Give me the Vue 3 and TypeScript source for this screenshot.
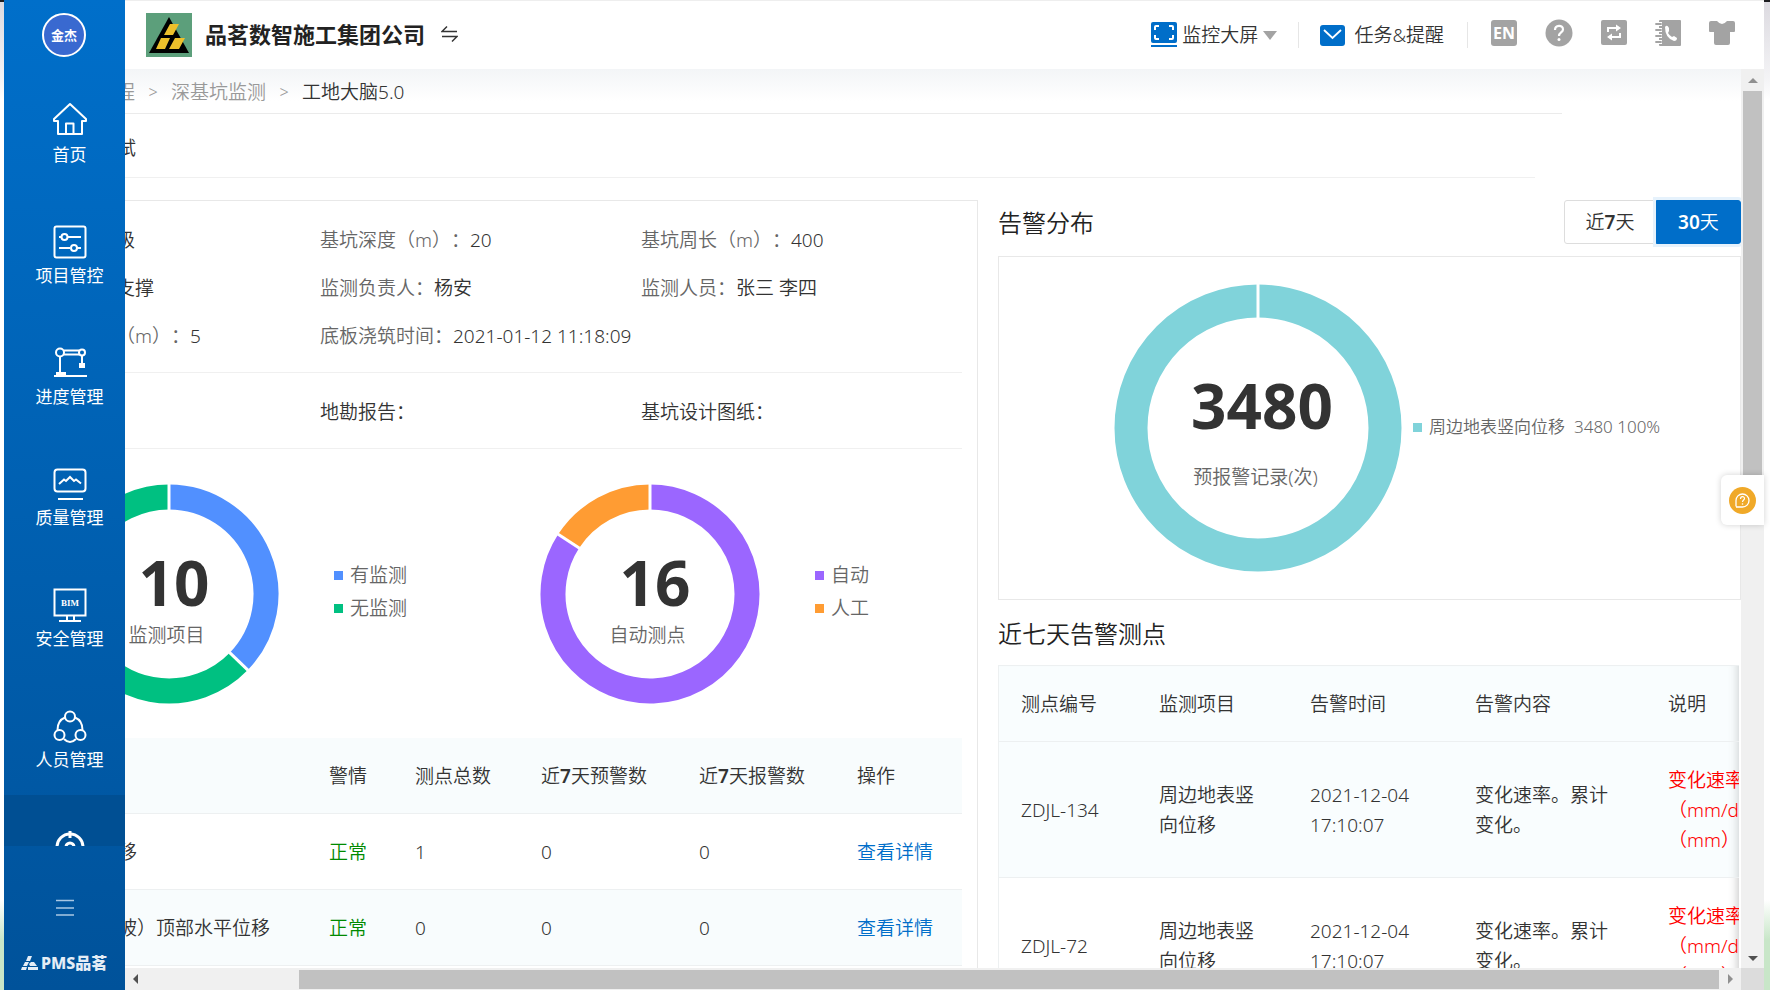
<script setup lang="ts">
import { computed, ref } from 'vue'

interface Slice { color: string; from: number; to: number }
interface NavItem { id: string; label: string }

const navItems: NavItem[] = [
  { id: 'home', label: '首页' },
  { id: 'project', label: '项目管控' },
  { id: 'progress', label: '进度管理' },
  { id: 'quality', label: '质量管理' },
  { id: 'safety', label: '安全管理' },
  { id: 'people', label: '人员管理' },
]

const range = ref<'7' | '30'>('30')

const itemSlices: Slice[] = [
  { color: '#5190ff', from: 0, to: 134 },
  { color: '#00c081', from: 134, to: 360 },
]
const pointSlices: Slice[] = [
  { color: '#9b66ff', from: 0, to: 303 },
  { color: '#ff9c33', from: 303, to: 360 },
]

function arc(slice: Slice, r: number): string {
  const at = (deg: number) => {
    const a = ((deg - 90) * Math.PI) / 180
    return `${(r * Math.cos(a)).toFixed(2)} ${(r * Math.sin(a)).toFixed(2)}`
  }
  const large = slice.to - slice.from > 180 ? 1 : 0
  return `M${at(slice.from)}A${r} ${r} 0 ${large} 1 ${at(slice.to)}`
}

const charts = computed(() => [
  {
    id: 'items', total: '10', caption: '监测项目', slices: itemSlices,
    legend: [{ color: '#5190ff', text: '有监测' }, { color: '#00c081', text: '无监测' }],
  },
  {
    id: 'points', total: '16', caption: '自动测点', slices: pointSlices,
    legend: [{ color: '#9b66ff', text: '自动' }, { color: '#ff9c33', text: '人工' }],
  },
])

const monitorRows = [
  { name: '移', state: '正常', total: 1, warn: 0, alarm: 0 },
  { name: '坡）顶部水平位移', state: '正常', total: 0, warn: 0, alarm: 0 },
]

const alarmRows = [
  { code: 'ZDJL-134', item: '周边地表竖向位移', time: '2021-12-04 17:10:07', content: '变化速率。累计变化。' },
  { code: 'ZDJL-72', item: '周边地表竖向位移', time: '2021-12-04 17:10:07', content: '变化速率。累计变化。' },
]
</script>

<template>
  <div class="app">
    <aside class="sidebar">
      <button class="avatar" type="button">金杰</button>
      <nav class="nav">
        <a v-for="item in navItems" :key="item.id" class="nav-item" href="#">
          <svg class="nav-icon" viewBox="0 0 34 34" fill="none" stroke="#fff" stroke-width="2">
            <g v-if="item.id === 'home'" stroke-linejoin="round" stroke-linecap="round">
              <path d="M1 15L17 0L33 15V17H29V30H5V17H1Z" />
              <path d="M13 30V19.500H20.500V30" />
            </g>
            <g v-else-if="item.id === 'project'">
              <rect x="1.500" y="1.500" width="31" height="31" rx="2" />
              <path d="M6 12H8M15 12H28M6 23H17M24 23H28" />
              <circle cx="11.500" cy="12" r="3" /><circle cx="21" cy="23" r="3" />
            </g>
            <g v-else-if="item.id === 'progress'">
              <circle cx="7" cy="6.500" r="4" /><circle cx="29" cy="6.500" r="3" />
              <path d="M11 4.500H26M11 8.500H26M7 11V27M29 10V18M1 30H34" />
              <path d="M4 27H12V30H4ZM27 18H31V21H27Z" fill="#fff" />
            </g>
            <g v-else-if="item.id === 'quality'">
              <rect x="1.500" y="2.500" width="31" height="22" rx="3" />
              <path d="M6 17L11 12.500L13 14L17 10L21 14L23 12.500L28 16.500M5 32H30" />
            </g>
            <g v-else-if="item.id === 'safety'">
              <path d="M1.500 1.500H32.500V27.500H1.500ZM14 28V32M21 28V32M6 33H28" />
              <text x="17" y="18" class="bim">BIM</text>
            </g>
            <g v-else>
              <circle cx="17" cy="7.500" r="5" /><circle cx="6.500" cy="26" r="5" /><circle cx="27.500" cy="26" r="5" />
              <path d="M12 8.500C7 10.500 4.500 15 4.500 21M22 8.500C27 10.500 29.500 15 29.500 21M11 30C15 34 19 34 23 30" />
            </g>
          </svg>
          <span>{{ item.label }}</span>
        </a>
        <a class="nav-item nav-next" href="#" aria-label="更多">
          <svg class="nav-icon" viewBox="0 0 34 34" fill="none" stroke="#fff" stroke-width="3">
            <circle cx="17" cy="17" r="13" /><circle cx="17" cy="17" r="4" /><path d="M17 1V8" />
          </svg>
        </a>
      </nav>
      <button class="menu" type="button" aria-label="菜单">
        <svg width="18" height="18" viewBox="0 0 18 18" stroke="#a9c7e4" stroke-width="1.500"><path d="M0 1.500H18M0 9H18M0 16H18" /></svg>
      </button>
      <div class="brand">
        <svg width="17" height="16" viewBox="0 0 17 16" fill="#e4edf6">
          <path d="M7 1H11L9 6H5ZM4 7H8L6 11H2ZM10 7H13L16 11H9L8 9ZM1 12H6L5 15H0ZM7 12H17V15H7Z" />
        </svg>
        <b>PMS品茗</b>
      </div>
    </aside>

    <div class="main">
      <header class="header">
        <svg class="logo" viewBox="0 0 46 44">
          <rect width="46" height="44" fill="#5c9f7b" />
          <path d="M23 4L43 40H3Z" fill="#000" />
          <path d="M24 11H33L27 22H18ZM15 25H24L19 36H10ZM29 25H39L33 36H23Z" fill="#edc02b" />
        </svg>
        <h1>品茗数智施工集团公司</h1>
        <button class="icon-btn switch" type="button" aria-label="切换">
          <svg width="17" height="18" viewBox="0 0 17 18" fill="none" stroke="#333" stroke-width="1.500"><path d="M16 6.500H1L6 1.500M1 11.500H16L11 16.500" /></svg>
        </button>
        <div class="spacer"></div>
        <button class="link-btn" type="button">
          <svg width="26" height="26" viewBox="0 0 26 26" fill="none">
            <rect width="26" height="21" rx="2" fill="#006ec9" /><path d="M0 24H26" stroke="#006ec9" stroke-width="2" />
            <path d="M4 8V5Q4 4 5 4H8M18 4H21Q22 4 22 5V8M22 13V16Q22 17 21 17H18M8 17H5Q4 17 4 16V13" stroke="#fff" stroke-width="2" />
          </svg>
          <span>监控大屏</span><i class="caret"></i>
        </button>
        <i class="divider"></i>
        <button class="link-btn task" type="button">
          <svg width="25" height="21" viewBox="0 0 25 21"><rect width="25" height="21" rx="3" fill="#006ec9" /><path d="M4 5L12.500 13L21 5" fill="none" stroke="#fff" stroke-width="1.800" /></svg>
          <span>任务&amp;提醒</span>
        </button>
        <i class="divider wide"></i>
        <div class="tools">
          <button class="icon-btn lang" type="button">EN</button>
          <button class="icon-btn" type="button" aria-label="帮助">
            <svg width="28" height="28" viewBox="0 0 28 28" fill="none"><circle cx="14" cy="14" r="13.500" fill="#a3a3a3" /><path d="M10 11C10 5.500 18 5.500 18 10.500C18 13.500 14 13.500 14 17" stroke="#fff" stroke-width="2.200" /><circle cx="14" cy="20.500" r="1.500" fill="#fff" /></svg>
          </button>
          <button class="icon-btn" type="button" aria-label="刷新">
            <svg width="26" height="26" viewBox="0 0 26 26" fill="none"><rect width="26" height="25" rx="2" fill="#a3a3a3" /><path d="M7 12V8H16M19 13V17H10" stroke="#fff" stroke-width="2" /><path d="M15 4.500L20 8L15 11.500ZM11 13.500L6 17L11 20.500Z" fill="#fff" /></svg>
          </button>
          <button class="icon-btn" type="button" aria-label="通讯录">
            <svg width="26" height="28" viewBox="0 0 26 28" fill="none">
              <rect x="4" y="1" width="22" height="26" rx="1" fill="#a3a3a3" />
              <path d="M1 5H7M1 11H7M1 17H7M1 23H7" stroke="#fff" stroke-width="4" /><path d="M1 5H6M1 11H6M1 17H6M1 23H6" stroke="#a3a3a3" stroke-width="1.800" stroke-linecap="round" />
              <path d="M10 8Q12 5 14 9L14 12L13 14Q14 16 17 18L19 17L22 19Q22 22 19 22Q10 19 10 8Z" fill="#fff" />
            </svg>
          </button>
          <button class="icon-btn" type="button" aria-label="换肤">
            <svg width="26" height="26" viewBox="0 0 26 26"><path d="M2 1H8Q13 7 18 1H24Q26 1 26 3V11Q26 12 25 12H21V23Q21 25 19 25H7Q5 25 5 23V12H1Q0 12 0 11V3Q0 1 2 1Z" fill="#a3a3a3" /></svg>
          </button>
        </div>
      </header>

      <div class="viewport">
        <div class="content">
          <nav class="crumbs">
            <a href="#">程</a><i>&gt;</i><a href="#">深基坑监测</a><i>&gt;</i><span>工地大脑5.0</span>
          </nav>
          <div class="subtitle">试</div>

          <div class="columns">
            <section class="left">
              <div class="info">
                <p><b>级</b></p>
                <p>基坑深度（m）：<b>20</b></p>
                <p>基坑周长（m）：<b>400</b></p>
                <p><b>支撑</b></p>
                <p>监测负责人：<b>杨安</b></p>
                <p>监测人员：<b>张三 李四</b></p>
                <p>（m）：<b>5</b></p>
                <p>底板浇筑时间：<b>2021-01-12 11:18:09</b></p>
              </div>
              <div class="files"><span>地勘报告：</span><span>基坑设计图纸：</span></div>
              <div class="charts">
                <figure v-for="chart in charts" :key="chart.id" class="chart">
                  <div class="ring">
                    <svg viewBox="-110 -110 220 220" fill="none">
                      <path v-for="s in chart.slices" :key="s.color" :d="arc(s, 97)" :stroke="s.color" stroke-width="25" />
                      <path d="M0 -84V-110" stroke="#fff" stroke-width="3" />
                      <path d="M0 -84V-110" stroke="#fff" stroke-width="3" :transform="`rotate(${chart.slices[0].to})`" />
                    </svg>
                    <figcaption class="ring-text"><strong>{{ chart.total }}</strong><span>{{ chart.caption }}</span></figcaption>
                  </div>
                  <ul class="legend">
                    <li v-for="l in chart.legend" :key="l.text"><i :style="{ background: l.color }"></i>{{ l.text }}</li>
                  </ul>
                </figure>
              </div>
              <table class="grid monitor">
                <colgroup><col class="m1" /><col class="m2" /><col class="m3" /><col class="m4" /><col class="m4" /><col /></colgroup>
                <thead>
                  <tr><th></th><th>警情</th><th>测点总数</th><th>近<b>7</b>天预警数</th><th>近<b>7</b>天报警数</th><th>操作</th></tr>
                </thead>
                <tbody>
                  <tr v-for="row in monitorRows" :key="row.name">
                    <td>{{ row.name }}</td><td class="ok">{{ row.state }}</td><td>{{ row.total }}</td>
                    <td>{{ row.warn }}</td><td>{{ row.alarm }}</td><td><a href="#">查看详情</a></td>
                  </tr>
                </tbody>
              </table>
            </section>

            <section class="right">
              <div class="section-head">
                <h2>告警分布</h2>
                <div class="toggle">
                  <button type="button" :class="{ active: range === '7' }" @click="range = '7'">近<b>7</b>天</button>
                  <button type="button" :class="{ active: range === '30' }" @click="range = '30'"><b>30</b>天</button>
                </div>
              </div>
              <figure class="panel">
                <div class="ring big">
                  <svg viewBox="-144 -144 288 288" fill="none">
                    <circle r="127" stroke="#80d3da" stroke-width="33" /><path d="M0 -110V-144" stroke="#fff" stroke-width="3" />
                  </svg>
                  <figcaption class="ring-text"><strong>3480</strong><span>预报警记录(次)</span></figcaption>
                </div>
                <ul class="legend small"><li><i class="teal"></i>周边地表竖向位移<span>3480 100%</span></li></ul>
              </figure>
              <h2 class="recent">近七天告警测点</h2>
              <div class="alarm-wrap">
                <table class="grid alarm">
                  <colgroup><col class="a1" /><col class="a2" /><col class="a3" /><col class="a4" /><col /></colgroup>
                  <thead><tr><th>测点编号</th><th>监测项目</th><th>告警时间</th><th>告警内容</th><th>说明</th></tr></thead>
                  <tbody>
                    <tr v-for="row in alarmRows" :key="row.code">
                      <td>{{ row.code }}</td><td>{{ row.item }}</td><td>{{ row.time }}</td><td>{{ row.content }}</td>
                      <td class="bad">变化速率<br />（mm/d<br />（mm）</td>
                    </tr>
                  </tbody>
                </table>
              </div>
            </section>
          </div>
        </div>

        <div class="vbar"><i class="arrow up"></i><i class="vthumb"></i><i class="arrow down"></i></div>
        <div class="hbar"><i class="arrow prev"></i><i class="hthumb"></i><i class="arrow next"></i></div>
        <div class="corner"></div>
        <button class="helper" type="button" aria-label="咨询">
          <svg width="27" height="27" viewBox="0 0 27 27" fill="none"><circle cx="13.500" cy="13.500" r="13.500" fill="#f0a928" /><path d="M7 19.500V13.500A6.500 6.500 0 1 1 13.500 20H7" stroke="#fff" stroke-width="1.300" /><path d="M11.500 12C11.500 9 15.500 9 15.500 11.500C15.500 13 13.500 13 13.500 15" stroke="#fff" stroke-width="1.200" /><circle cx="13.500" cy="17" r=".8" fill="#fff" /></svg>
        </button>
      </div>
    </div>
  </div>
</template>

<style>
body { margin: 0; }
</style>

<style scoped>
* { box-sizing: border-box; }
.app {
  height: 100vh; display: grid; grid-template: minmax(0, 1fr) / 121px minmax(0, 1fr); padding: 0 6px 0 4px; overflow: hidden;
  background: linear-gradient(#1d1d20 0 2px, #dcdae0 2px, #f4f4f6 80px, #fff 100px, #fff 900px, #c8e6c8 940px);
  font: 350 19px/30px "Noto Sans", "Noto Sans CJK SC", sans-serif; color: #333; text-spacing-trim: space-all;
}
h1, h2, p, ul, figure { margin: 0; padding: 0; }
ul { list-style: none; }
i { font-style: normal; }
a { color: inherit; text-decoration: none; }
button { font: inherit; color: inherit; border: 0; padding: 0; background: none; cursor: pointer; }
svg { display: block; flex: none; }

.sidebar { display: flex; flex-direction: column; background: linear-gradient(#006fca, #00529a); color: #fff; }
.avatar { width: 44px; height: 44px; margin: 13px 0 12px 38px; flex: none; border: 2px solid #fff; border-radius: 50%; background: #3969d0; font-size: 13px; line-height: 20px; font-weight: 700; }
.nav { height: 777px; overflow: hidden; flex: 0 1 auto; }
.nav-item { display: flex; flex-direction: column; align-items: center; gap: 5px; height: 121px; padding: 35px 0 0 10px; font-size: 17px; line-height: 24px; font-weight: 400; }
.nav-icon { width: 34px; height: 34px; overflow: visible; }
.nav-next { background: #004f93; }
.bim { fill: #fff; stroke: none; font: 700 9px "Liberation Serif", serif; text-anchor: middle; }
.menu { margin: 53px 0 0 52px; width: 18px; }
.brand { display: flex; align-items: center; gap: 3px; margin: 34px 0 0 17px; color: #e4edf6; font-size: 16px; line-height: 24px; white-space: nowrap; }
.brand b { font-weight: 800; }

.main { display: flex; flex-direction: column; min-width: 0; background: #fff; }
.header { flex: none; height: 69px; display: flex; align-items: center; padding: 0 29px 0 21px; border-top: 1px solid #eee; background: #fff; }
.logo { width: 46px; height: 44px; }
h1 { margin: 0 16px 0 13px; padding-bottom: 2px; font-size: 22px; line-height: 32px; font-weight: 700; color: #222; white-space: nowrap; }
.switch { padding-bottom: 3px; }
.spacer { flex: 1; }
.link-btn { display: flex; align-items: center; gap: 5px; white-space: nowrap; }
.link-btn.task { gap: 9px; }
.caret { border: 7px solid transparent; border-top: 9px solid #a3a3a3; border-bottom: 0; }
.divider { width: 1px; height: 26px; margin: 0 21px; background: #e6e6e6; }
.divider.wide { margin: 0 23px; }
.tools { display: flex; align-items: center; gap: 28px; padding-bottom: 4px; }
.lang { width: 26px; height: 26px; border-radius: 3px; background: #a3a3a3; color: #fff; font-size: 16px; line-height: 26px; font-weight: 700; }

.viewport { position: relative; flex: 1; min-height: 0; display: grid; grid-template: minmax(0, 1fr) 22px / minmax(0, 1fr) 23px; }
.content { overflow: hidden; background: linear-gradient(#f3f5f7, #fff 32px); }
.crumbs { display: flex; align-items: center; height: 45px; margin: 0 179px 0 0; padding-top: 2px; border-bottom: 1px solid #ebebeb; white-space: nowrap; color: #999; }
.crumbs a:first-child { margin-left: -9px; }
.crumbs i { width: 36px; text-align: center; font-size: 16px; }
.crumbs span { color: #333; }
.subtitle { height: 64px; margin-right: 206px; padding-top: 19px; border-bottom: 1px solid #f0f0f0; text-indent: -8px; }
.columns { display: grid; grid-template-columns: minmax(0, 862fr) minmax(0, 743fr); gap: 20px; margin: 22px 0 0 -9px; }

.left { border: 1px solid #e8e8e8; border-left: 0; padding-right: 15px; }
.info { display: grid; grid-template-columns: 204px 321px 1fr; row-gap: 18px; padding: 24px 0 22px; height: 172px; border-bottom: 1px solid #f0f0f0; color: #666; white-space: nowrap; }
.info b { font-weight: inherit; color: #333; }
.files { display: grid; grid-template-columns: 321px 1fr; height: 76px; padding: 24px 0 0 204px; border-bottom: 1px solid #f0f0f0; }
.charts { display: flex; height: 289px; padding-top: 35px; margin-left: -57px; }
.chart { display: flex; width: 481px; flex: none; }
.ring { display: grid; width: 220px; height: 220px; }
.ring > * { grid-area: 1 / 1; }
.ring-text { display: flex; flex-direction: column; align-items: center; padding-top: 66px; color: #666; }
.ring-text strong { font-size: 62px; line-height: 64px; font-weight: 700; color: #333; padding-left: 10px; }
.ring-text span { margin-top: 6px; padding-right: 5px; }
.legend { padding: 76px 0 0 55px; color: #666; }
.legend li { display: flex; align-items: center; gap: 7px; margin-bottom: 3px; white-space: nowrap; }
.legend i { width: 9px; height: 9px; }

.grid { width: 100%; border-collapse: separate; border-spacing: 0; table-layout: fixed; }
.grid th, .grid td { font-weight: inherit; text-align: left; padding: 23px 0 22px; border-bottom: 1px solid #edf0f1; }
.grid th { background: #f8fcfd; }
.monitor td:first-child { padding-left: 2px; white-space: nowrap; }
.monitor tbody tr:nth-child(even) { background: #f8fcfd; }
.monitor b { font-weight: 600; }
.m1 { width: 213px; } .m2 { width: 86px; } .m3 { width: 126px; } .m4 { width: 158px; }
.ok { color: #008a00; }
.grid a { color: #006ec9; }

.section-head { display: flex; justify-content: space-between; height: 56px; }
h2 { font-size: 24px; line-height: 46px; font-weight: inherit; color: #222; }
.toggle { display: flex; height: 44px; }
.toggle button { width: 92px; border: 1px solid #ddd; border-radius: 3px 0 0 3px; }
.toggle button + button { width: 85px; border-radius: 0 3px 3px 0; }
.toggle .active { background: #006ec9; border-color: #006ec9; color: #fff; box-shadow: 0 0 0 3px #e6f2fc; }
.toggle b { font-weight: 600; }
.panel { display: flex; height: 344px; padding: 27px 0 0 115px; border: 1px solid #e8e8e8; }
.ring.big { width: 288px; height: 288px; }
.big .ring-text { padding-top: 89px; }
.big .ring-text strong { padding-left: 8px; }
.big .ring-text span { margin-top: 25px; }
.legend.small { padding: 128px 0 0 11px; font-size: 17px; }
.legend .teal { background: #80d3da; }
.legend span { margin-left: 2px; }
.recent { padding: 11px 0 8px; }
.alarm-wrap { border: 1px solid #edf0f1; border-right: 0; overflow: hidden; box-shadow: inset -10px 0 8px -8px #ccc; margin-right: 2px; }
.alarm th, .alarm td { padding-left: 22px; padding-right: 20px; }
.alarm th { background: none; }
.alarm thead, .alarm tbody tr:nth-child(odd) { background: rgb(230 246 250 / 25%); }
.a1 { width: 138px; } .a2 { width: 151px; } .a3 { width: 165px; } .a4 { width: 193px; }
.alarm .bad { color: #f00; padding-right: 0; white-space: nowrap; }

.vbar { display: flex; flex-direction: column; align-items: center; background: #f0f0f0; padding: 9px 0 7px; }
.vthumb { width: 19px; flex: 0 0 430px; margin: 8px 0 auto; background: #c1c1c1; }
.hbar { display: flex; align-items: center; background: #f0f0f0; padding: 0 8px; }
.hthumb { flex: 1; height: 19px; margin: 0 9px 0 161px; background: #c1c1c1; }
.corner { background: #dcdcdc; }
.arrow { border: 5px solid transparent; }
.arrow.up { border-bottom-color: #909090; border-top: 0; }
.arrow.down { border-top-color: #505050; border-bottom: 0; }
.arrow.prev { border-right-color: #505050; border-left: 0; }
.arrow.next { border-left-color: #909090; border-right: 0; }
.helper { position: absolute; right: 0; top: 406px; width: 43px; height: 50px; padding-left: 8px; border-radius: 6px 0 0 6px; background: #fff; box-shadow: 0 0 6px rgb(0 0 0 / 18%); }
</style>
